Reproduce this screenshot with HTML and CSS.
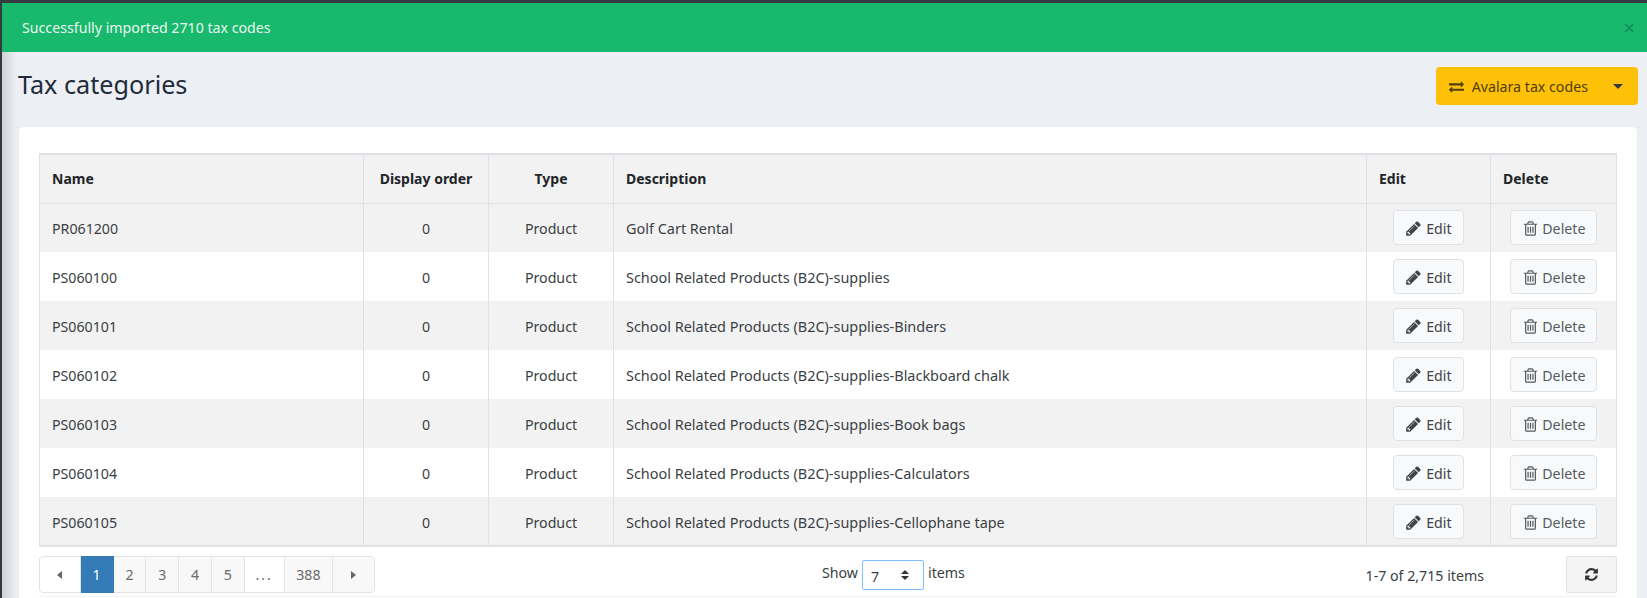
FILE: index.html
```html
<!DOCTYPE html>
<html lang="en">
  <head>
    <meta charset="UTF-8" />
    <title>Tax categories</title>
    <link rel="stylesheet" href="styles.css">
  </head>
  <body>
    <svg class="icon-defs" xmlns="http://www.w3.org/2000/svg">
      <symbol id="i-pencil" viewBox="0 0 1792 1792"><path d="M491 1536l91-91-235-235-91 91v107h128v128h107zm523-928q0-22-22-22-10 0-17 7l-542 542q-7 7-7 17 0 22 22 22 10 0 17-7l542-542q7-7 7-17zm-54-192l416 416-832 832h-416v-416zm683 96q0 53-37 90l-166 166-416-416 166-165q36-38 90-38 53 0 91 38l235 234q37 39 37 91z"/></symbol>
      <symbol id="i-trash" viewBox="0 0 1792 1792"><path d="M704 736v576q0 14-9 23t-23 9h-64q-14 0-23-9t-9-23v-576q0-14 9-23t23-9h64q14 0 23 9t9 23zm256 0v576q0 14-9 23t-23 9h-64q-14 0-23-9t-9-23v-576q0-14 9-23t23-9h64q14 0 23 9t9 23zm256 0v576q0 14-9 23t-23 9h-64q-14 0-23-9t-9-23v-576q0-14 9-23t23-9h64q14 0 23 9t9 23zm128 724v-948h-896v948q0 22 7 40.500t14.500 27 10.500 8.500h832q3 0 10.500-8.500t14.500-27 7-40.500zm-672-1076h448l-48-117q-7-9-17-11h-317q-10 2-17 11zm928 32v64q0 14-9 23t-23 9h-96v948q0 83-47 143.500t-113 60.500h-832q-66 0-113-58.500t-47-141.500v-952h-96q-14 0-23-9t-9-23v-64q0-14 9-23t23-9h309l70-167q15-37 54-63t79-26h320q40 0 79 26t54 63l70 167h309q14 0 23 9t9 23z"/></symbol>
      <symbol id="i-exchange" viewBox="0 0 1792 1792"><path d="M1792 1184v192q0 13-9.500 22.500t-22.500 9.500h-1376v192q0 13-9.500 22.500t-22.500 9.500q-12 0-24-10l-319-320q-9-9-9-22 0-14 9-23l320-320q9-9 23-9 13 0 22.500 9.500t9.500 22.500v192h1376q13 0 22.500 9.500t9.500 22.500zm0-544q0 14-9 23l-320 320q-9 9-23 9-13 0-22.500-9.500t-9.500-22.500v-192h-1376q-13 0-22.500-9.500t-9.500-22.500v-192q0-13 9.500-22.500t22.500-9.500h1376v-192q0-14 9-23t23-9q12 0 24 10l319 319q9 9 9 23z"/></symbol>
      <symbol id="i-refresh" viewBox="0 0 1792 1792"><path d="M1639 1056q0 5-1 7-64 268-268 434.500t-478 166.500q-146 0-282.500-55t-243.500-157l-129 129q-19 19-45 19t-45-19-19-45v-448q0-26 19-45t45-19h448q26 0 45 19t19 45-19 45l-137 137q71 66 161 102t187 36q134 0 250-65t186-179q11-17 53-117 8-23 30-23h192q13 0 22.500 9.500t9.500 22.500zm25-800v448q0 26-19 45t-45 19h-448q-26 0-45-19t-19-45 19-45l138-138q-148-137-349-137-134 0-250 65t-186 179q-11 17-53 117-8 23-30 23h-199q-13 0-22.500-9.500t-9.500-22.500v-7q65-268 270-434.500t480-166.500q146 0 284 55.500t245 156.500l130-129q19-19 45-19t45 19 19 45z"/></symbol>
    </svg>

    <div class="wrapper">
      <div class="alert">
        <span>Successfully imported 2710 tax codes</span>
        <span class="alert-close">×</span>
      </div>

      <div class="content-header">
        <h1>Tax categories</h1>
        <div class="btn-group">
          <button class="btn-avalara">
            <svg class="icon"><use href="#i-exchange"/></svg>
            Avalara tax codes
          </button>
          <button class="btn-caret"><span class="caret"></span></button>
        </div>
      </div>

      <div class="card">
        <table class="grid">
          <colgroup>
            <col class="col-name" />
            <col class="col-order" />
            <col class="col-type" />
            <col class="col-desc" />
            <col class="col-edit" />
            <col class="col-delete" />
          </colgroup>
          <thead>
            <tr>
              <th>Name</th>
              <th class="center">Display order</th>
              <th class="center">Type</th>
              <th>Description</th>
              <th>Edit</th>
              <th>Delete</th>
            </tr>
          </thead>
          <tbody>
            <tr>
              <td>PR061200</td>
              <td class="center">0</td>
              <td class="center">Product</td>
              <td>Golf Cart Rental</td>
              <td class="center"><a class="btn-row btn-edit"><svg class="icon"><use href="#i-pencil"/></svg> Edit</a></td>
              <td class="center"><a class="btn-row btn-delete"><svg class="icon"><use href="#i-trash"/></svg> Delete</a></td>
            </tr>
            <tr>
              <td>PS060100</td>
              <td class="center">0</td>
              <td class="center">Product</td>
              <td>School Related Products (B2C)-supplies</td>
              <td class="center"><a class="btn-row btn-edit"><svg class="icon"><use href="#i-pencil"/></svg> Edit</a></td>
              <td class="center"><a class="btn-row btn-delete"><svg class="icon"><use href="#i-trash"/></svg> Delete</a></td>
            </tr>
            <tr>
              <td>PS060101</td>
              <td class="center">0</td>
              <td class="center">Product</td>
              <td>School Related Products (B2C)-supplies-Binders</td>
              <td class="center"><a class="btn-row btn-edit"><svg class="icon"><use href="#i-pencil"/></svg> Edit</a></td>
              <td class="center"><a class="btn-row btn-delete"><svg class="icon"><use href="#i-trash"/></svg> Delete</a></td>
            </tr>
            <tr>
              <td>PS060102</td>
              <td class="center">0</td>
              <td class="center">Product</td>
              <td>School Related Products (B2C)-supplies-Blackboard chalk</td>
              <td class="center"><a class="btn-row btn-edit"><svg class="icon"><use href="#i-pencil"/></svg> Edit</a></td>
              <td class="center"><a class="btn-row btn-delete"><svg class="icon"><use href="#i-trash"/></svg> Delete</a></td>
            </tr>
            <tr>
              <td>PS060103</td>
              <td class="center">0</td>
              <td class="center">Product</td>
              <td>School Related Products (B2C)-supplies-Book bags</td>
              <td class="center"><a class="btn-row btn-edit"><svg class="icon"><use href="#i-pencil"/></svg> Edit</a></td>
              <td class="center"><a class="btn-row btn-delete"><svg class="icon"><use href="#i-trash"/></svg> Delete</a></td>
            </tr>
            <tr>
              <td>PS060104</td>
              <td class="center">0</td>
              <td class="center">Product</td>
              <td>School Related Products (B2C)-supplies-Calculators</td>
              <td class="center"><a class="btn-row btn-edit"><svg class="icon"><use href="#i-pencil"/></svg> Edit</a></td>
              <td class="center"><a class="btn-row btn-delete"><svg class="icon"><use href="#i-trash"/></svg> Delete</a></td>
            </tr>
            <tr>
              <td>PS060105</td>
              <td class="center">0</td>
              <td class="center">Product</td>
              <td>School Related Products (B2C)-supplies-Cellophane tape</td>
              <td class="center"><a class="btn-row btn-edit"><svg class="icon"><use href="#i-pencil"/></svg> Edit</a></td>
              <td class="center"><a class="btn-row btn-delete"><svg class="icon"><use href="#i-trash"/></svg> Delete</a></td>
            </tr>
          </tbody>
        </table>

        <div class="pager">
          <div class="pages">
            <a class="page page-arrow"><span class="tri tri-left"></span></a>
            <a class="page page-num active">1</a>
            <a class="page page-num">2</a>
            <a class="page page-num">3</a>
            <a class="page page-num">4</a>
            <a class="page page-num">5</a>
            <a class="page page-more">...</a>
            <a class="page page-last">388</a>
            <a class="page page-arrow"><span class="tri tri-right"></span></a>
          </div>
          <div class="page-size">
            <span class="size-label">Show</span>
            <span class="select">
              <span class="select-value">7</span>
              <span class="select-arrows"><span class="tri-up"></span><span class="tri-down"></span></span>
            </span>
            <span class="size-label">items</span>
          </div>
          <div class="page-info">1-7 of 2,715 items</div>
          <a class="btn-refresh"><svg class="icon"><use href="#i-refresh"/></svg></a>
        </div>
      </div>
    </div>
  </body>
</html>
```

FILE: styles.css
```css
html,
body {
  margin: 0;
  padding: 0;
  height: 100%;
  overflow: hidden;
  background: #343a40;
  font-family: "Noto Sans", "Open Sans", sans-serif;
  font-size: 14.2px;
  color: #212529;
}
.icon-defs {
  display: none;
}
.icon {
  width: 15px;
  height: 15px;
  fill: currentColor;
  vertical-align: -2px;
}
.wrapper {
  margin: 3px 0 0 2px;
  height: 595px;
  background: #ecf0f5 linear-gradient(90deg, #cfd2d8, #ecf0f5 14px);
  overflow: hidden;
}
.alert {
  display: flex;
  justify-content: space-between;
  align-items: center;
  height: 49px;
  padding: 0 12px 0 20px;
  background: #18b86d;
  color: #e8f7ef;
}
.alert-close {
  font-size: 20px;
  color: #0f8a55;
}
.content-header {
  display: flex;
  justify-content: space-between;
  align-items: center;
  padding: 15px 9px 22px 16px;
}
h1 {
  margin: 0 0 4px;
  font-size: 25.2px;
  font-weight: 400;
  color: #212b3a;
}
.btn-group {
  display: flex;
  height: 38px;
  width: 202px;
  border-radius: 4px;
  background: #ffc107;
  color: #4f400c;
}
.btn-group button {
  border: 0;
  background: none;
  font: inherit;
  color: inherit;
  padding: 0;
}
.btn-avalara {
  flex: 1;
  text-align: left;
  padding-left: 13px !important;
}
.btn-avalara .icon {
  width: 15px;
  height: 15px;
  margin-right: 4px;
}
.btn-caret {
  width: 40px;
}
.caret {
  display: inline-block;
  vertical-align: 3px;
  border-top: 5px solid #343a40;
  border-left: 5px solid transparent;
  border-right: 5px solid transparent;
}
.card {
  margin: 0 10px 0 17px;
  padding: 26px 20px 0;
  height: 460px;
  background: #fff;
  border-radius: 4px;
  box-shadow: 0 0 1px rgba(0, 0, 0, 0.15);
}
.grid {
  width: 100%;
  table-layout: fixed;
  border-collapse: collapse;
  border-top: 2px solid #dee2e6;
  border-bottom: 2px solid #dee2e6;
}
.col-name { width: 324px; }
.col-order { width: 125px; }
.col-type { width: 125px; }
.col-edit { width: 124px; }
.col-delete { width: 126px; }
.grid th,
.grid td {
  padding: 0 12px;
  height: 49px;
  box-sizing: border-box;
  text-align: left;
  border-left: 1px solid #dee2e6;
  border-right: 1px solid #dee2e6;
}
.grid th {
  background: #f2f2f2;
  font-weight: 700;
  font-size: 14px;
  border-bottom: 1px solid #dee2e6;
}
.grid tbody tr:nth-child(odd) td {
  background: #f2f2f2;
}
.grid td {
  color: #3a3f44;
}
.grid td:nth-child(-n+4) {
  padding-top: 2px;
}
.grid td:nth-child(4) {
  font-size: 14.45px;
}
.grid .center {
  text-align: center;
}
.btn-row {
  display: inline-block;
  box-sizing: border-box;
  height: 35px;
  line-height: 35px;
  background: #f8f9fa;
  border: 1px solid #dfe2e5;
  border-radius: 4px;
  text-align: center;
  white-space: nowrap;
}
.btn-row .icon {
  width: 17px;
  height: 17px;
  vertical-align: -3px;
}
.btn-edit {
  width: 71px;
  color: #3f444a;
}
.btn-delete {
  width: 87px;
  color: #565a5e;
}
.pager {
  display: grid;
  grid-template-columns: 336px 1fr auto 51px;
  align-items: center;
  margin-top: 9px;
  padding-bottom: 3px;
  border-bottom: 1px solid #f2f2f2;
}
.pages {
  display: flex;
  width: 336px;
  height: 37px;
  box-sizing: border-box;
  border: 1px solid #e3e3e3;
  border-radius: 4px;
}
.page {
  display: flex;
  align-items: center;
  justify-content: center;
  box-sizing: border-box;
  border-right: 1px solid #e3e3e3;
  background: #f8f8f8;
  color: #6b6b6b;
}
.page:first-child {
  background: #fff;
  border-radius: 4px 0 0 4px;
}
.page:last-child {
  border-right: 0;
  border-radius: 0 4px 4px 0;
}
.page-arrow {
  width: 41px;
}
.page-num {
  width: 33px;
}
.page-more {
  width: 40px;
  background: #fff;
  letter-spacing: 2px;
}
.page-last {
  width: 49px;
}
.page.active {
  margin-top: -1px;
  height: 37px;
  background: #337ab7;
  border-color: #337ab7;
  color: #fff;
}
.tri {
  border-top: 4px solid transparent;
  border-bottom: 4px solid transparent;
}
.tri-left {
  border-right: 5px solid #666;
}
.tri-right {
  border-left: 5px solid #666;
}
.page-size {
  display: flex;
  align-items: center;
  gap: 4px;
  padding-left: 447px;
  color: #3a3f44;
}
.size-label {
  margin-bottom: 5px;
}
.select {
  display: flex;
  align-items: center;
  justify-content: space-between;
  box-sizing: border-box;
  width: 62px;
  height: 30px;
  padding: 0 14px 0 8px;
  border: 1px solid #80bdff;
  border-radius: 2px;
}
.select-value {
  margin-top: 3px;
}
.select-arrows {
  display: flex;
  flex-direction: column;
  gap: 2px;
}
.tri-up,
.tri-down {
  border-left: 4px solid transparent;
  border-right: 4px solid transparent;
}
.tri-up {
  border-bottom: 4px solid #333;
}
.tri-down {
  border-top: 4px solid #333;
}
.page-info {
  margin-right: 82px;
  padding-top: 1px;
  color: #3a3f44;
}
.btn-refresh {
  display: flex;
  align-items: center;
  justify-content: center;
  width: 51px;
  height: 37px;
  box-sizing: border-box;
  background: #f4f4f4;
  border: 1px solid #e3e3e3;
  border-radius: 2px;
  color: #333;
}
```
